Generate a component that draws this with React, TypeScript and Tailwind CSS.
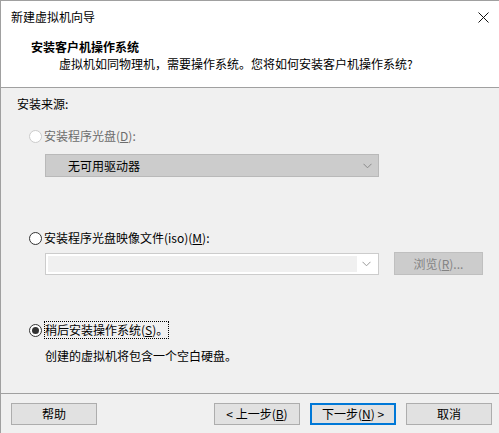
import React from 'react';

const font = { fontFamily: '"Noto Sans CJK SC", "Liberation Sans", sans-serif' };

function Radio({ checked = false, disabled = false }: { checked?: boolean; disabled?: boolean }) {
  return (
    <span
      className={`flex h-[13px] w-[13px] items-center justify-center rounded-full border bg-white ${
        disabled ? 'border-[#cccccc]' : 'border-[#333333]'
      }`}
    >
      {checked && <span className="h-[7px] w-[7px] rounded-full bg-[#333333]" />}
    </span>
  );
}

function Chevron({ color }: { color: string }) {
  return (
    <svg width="9" height="6" viewBox="0 0 9 6" fill="none">
      <path d="M0.5 0.8 L4.5 4.8 L8.5 0.8" stroke={color} strokeWidth="1" />
    </svg>
  );
}

function Btn({ children, focused = false }: { children: React.ReactNode; focused?: boolean }) {
  return (
    <button
      className={`flex h-[22px] w-[86px] items-center justify-center bg-[#e1e1e1] text-[12px] leading-none text-black ${
        focused ? 'border-2 border-[#0078d7]' : 'border border-[#adadad]'
      }`}
    >
      {children}
    </button>
  );
}

export default function App() {
  return (
    <div className="flex h-[433px] w-[499px] flex-col overflow-hidden border-l border-t border-[#a0a0a0] bg-[#f0f0f0] text-black" style={font}>
      <div className="flex h-[87px] flex-col border-b border-[#a0a0a0] bg-white">
        <div className="flex h-[32px] items-center justify-between pl-[10px] pr-[8px]">
          <span className="text-[12px] leading-none">新建虚拟机向导</span>
          <svg width="11" height="11" viewBox="0 0 11 11" className="mr-[2px]">
            <path d="M0.5 0.5 L10.5 10.5 M10.5 0.5 L0.5 10.5" stroke="#111" strokeWidth="1" />
          </svg>
        </div>
        <div className="pl-[30px] pt-[7px] text-[12px] font-bold leading-[14px]">安装客户机操作系统</div>
        <div className="pl-[58px] pt-[3px] text-[12px] leading-[14px]">
          虚拟机如同物理机，需要操作系统。您将如何安装客户机操作系统?
        </div>
      </div>

      <div className="flex flex-1 flex-col pl-[16px] pr-[16px]">
        <div className="pt-[9px] text-[12px] leading-[14px]">安装来源:</div>

        <div className="mt-[18px] flex items-center gap-[2px] pl-[12px] text-[12px] leading-[14px] text-[#6d6d6d]">
          <Radio disabled />
          <span>
            安装程序光盘(<span className="underline">D</span>):
          </span>
        </div>
        <div className="mt-[11px] ml-[28px] flex h-[23px] w-[334px] items-center justify-between border border-[#b9b9b9] bg-[#cccccc] pl-[22px] pr-[6px] text-[12px] leading-none">
          <span>无可用驱动器</span>
          <Chevron color="#8a8a8a" />
        </div>

        <div className="mt-[54px] flex items-center gap-[2px] pl-[12px] text-[12px] leading-[14px]">
          <Radio />
          <span>
            安装程序光盘映像文件(iso)(<span className="underline">M</span>):
          </span>
        </div>
        <div className="mt-[7px] flex items-center">
          <div className="ml-[28px] flex h-[22px] w-[334px] items-center border border-[#cccccc] bg-white p-[2px]">
            <div className="h-full w-[309px] bg-[#f0f0f0]" />
            <div className="flex flex-1 justify-center">
              <Chevron color="#9a9a9a" />
            </div>
          </div>
          <div className="ml-[15px] flex h-[23px] w-[89px] items-center justify-center border border-[#bfbfbf] bg-[#cccccc] text-[12px] leading-none text-[#838383]">
            浏览(<span className="underline">R</span>)...
          </div>
        </div>

        <div className="mt-[46px] flex items-center gap-[2px] pl-[12px] text-[12px] leading-[14px]">
          <Radio checked />
          <span className="border border-dotted border-black px-[0px] py-[1px]">
            稍后安装操作系统(<span className="underline">S</span>)。
          </span>
        </div>
        <div className="mt-[10px] pl-[28px] text-[12px] leading-[14px]">创建的虚拟机将包含一个空白硬盘。</div>
      </div>

      <div className="flex h-[40px] items-start border-t border-[#a0a0a0] pl-[10px] pr-[7px] pt-[9px]">
        <Btn>帮助</Btn>
        <div className="flex-1" />
        <div className="flex gap-[10px]">
          <Btn>
            &lt; 上一步(<span className="underline">B</span>)
          </Btn>
          <Btn focused>
            下一步(<span className="underline">N</span>) &gt;
          </Btn>
          <Btn>取消</Btn>
        </div>
      </div>
    </div>
  );
}
